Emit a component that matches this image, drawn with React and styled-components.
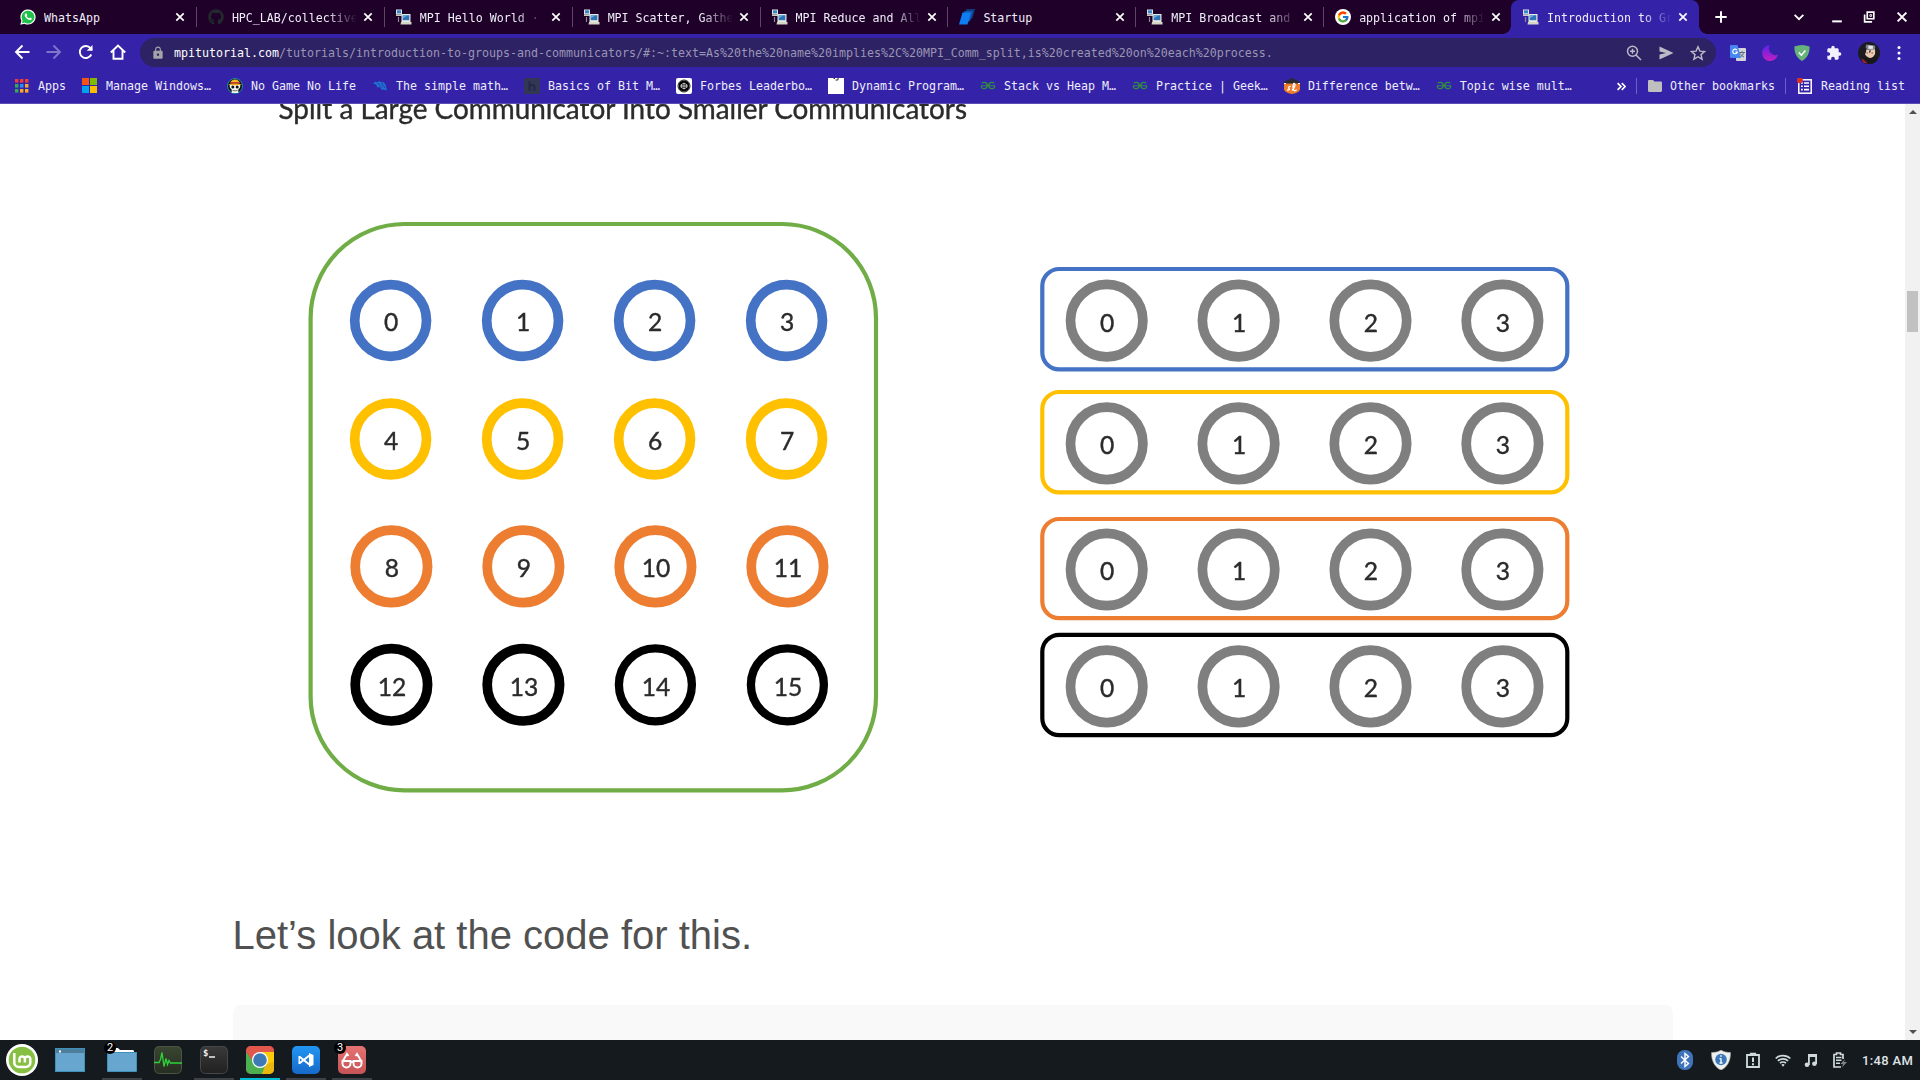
import React from 'react';
import styled, { createGlobalStyle } from 'styled-components';
import { MdLock, MdExtension } from 'react-icons/md';
import { FaGithub } from 'react-icons/fa';
import { FcGoogle } from 'react-icons/fc';
import { SiGeeksforgeeks, SiCodepen } from 'react-icons/si';

const Global = createGlobalStyle`
  * { box-sizing: border-box; }
  body { margin: 0; background: #fff; overflow: hidden; }
  svg { display: block; flex: none; }
`;

const Screen = styled.div`
  width: 1920px;
  height: 1080px;
  display: flex;
  flex-direction: column;
  overflow: hidden;
`;

const Chrome = styled.header`
  height: 104px;
  flex: none;
  background: #3423a9;
  border-bottom: 1px solid #5c4fba;
  font: 11.63px/16px 'DejaVu Sans Mono', monospace;
  color: #efedf8;
  white-space: pre;
`;

const TabStrip = styled.div`
  height: 34px;
  display: flex;
  padding-left: 8px;
  background: #1e0029;
`;

const TabBox = styled.div`
  width: 187.88px;
  height: 34px;
  display: flex;
  align-items: center;
  padding: 0 10.5px 0 12px;
  position: relative;
  background: ${(p) => (p.$active ? '#3423a9' : 'transparent')};
  border-radius: 8px 8px 0 0;
  &::before, &::after {
    content: '';
    display: ${(p) => (p.$active ? 'block' : 'none')};
    position: absolute;
    bottom: 0;
    width: 8px;
    height: 8px;
  }
  &::before { left: -8px; background: radial-gradient(circle at 0 0, transparent 7.5px, #3423a9 8px); }
  &::after { right: -8px; background: radial-gradient(circle at 100% 0, transparent 7.5px, #3423a9 8px); }
`;

const TabDivider = styled.i`
  position: absolute;
  right: -1px;
  top: 7px;
  width: 1px;
  height: 20px;
  background: #5d4666;
`;

const TabTitle = styled.span`
  flex: 1;
  min-width: 0;
  margin: 2px 6px 0 8px;
  overflow: hidden;
  ${(p) => p.$fade && 'mask-image: linear-gradient(90deg, #000 calc(100% - 30px), transparent);'}
`;

const WindowButtons = styled.div`
  flex: 1;
  display: flex;
  align-items: center;
  padding-left: 15px;
`;

const Control = styled.span`
  width: 14px;
  height: 14px;
  margin-left: ${(p) => p.$left || 0}px;
`;

const Toolbar = styled.div`
  height: 37px;
  display: flex;
  align-items: center;
  padding: 0 7px 0 14px;
`;

const NavButtons = styled.div`
  display: flex;
  gap: 16px;
  width: 126px;
  margin-top: -1px;
`;

const Omnibox = styled.div`
  width: 1576px;
  height: 29px;
  border-radius: 15px;
  background: #2c2264;
  display: flex;
  align-items: center;
  padding: 0 10px 0 11px;
  color: #9b95b5;
`;

const Url = styled.span`
  flex: 1;
  margin-left: 9px;
  b { font-weight: 400; color: #fff; }
`;

const OmniActions = styled.div`
  display: flex;
  gap: 16px;
`;

const Extensions = styled.div`
  display: flex;
  align-items: center;
  gap: 16px;
  margin-left: 14px;
`;

const BookmarkBar = styled.div`
  height: 32px;
  display: flex;
  align-items: center;
  padding: 0 15px 2px 14px;
`;

const BookmarkItem = styled.div`
  display: flex;
  align-items: center;
  gap: 8px;
  margin-right: ${(p) => (p.$last ? 0 : 16)}px;
`;

const Overflow = styled.div`
  margin: 0 8px 0 auto;
`;

const BarDivider = styled.i`
  width: 1px;
  height: 16px;
  margin: 0 11px 0 ${(p) => p.$pull || 0}px;
  background: #6d60c3;
`;

const Viewport = styled.main`
  flex: 1;
  min-height: 0;
  display: flex;
`;

const Page = styled.div`
  flex: 1;
  padding: 0 232px 0 233px;
  overflow: hidden;
  background: #fff;
`;

const Figure = styled.figure`
  margin: 0;
  height: 776px;
  svg { filter: blur(0.6px); overflow: hidden; }
  text {
    font-family: Lato, sans-serif;
    fill: #2b2b2b;
    stroke: #2b2b2b;
    stroke-width: 0.4px;
  }
`;

const Paragraph = styled.p`
  margin: 0 0 0 -0.5px;
  height: 125px;
  padding-top: 32px;
  font: 40px/46px 'Liberation Sans', Arial, sans-serif;
  color: #515151;
`;

const CodeBlock = styled.div`
  height: 60px;
  border-radius: 8px;
  background: #f9f9f9;
`;

const Scrollbar = styled.div`
  width: 15px;
  background: #f1f1f1;
  display: flex;
  flex-direction: column;
  align-items: center;
  padding: 6px 0;
`;

const Thumb = styled.div`
  width: 11px;
  height: 41px;
  margin-top: 177px;
  margin-bottom: auto;
  background: #c1c1c1;
`;

const Taskbar = styled.footer`
  height: 40px;
  flex: none;
  background: #151a1e;
  display: flex;
  align-items: center;
  padding: 0 8px 0 2px;
`;

const Launcher = styled.div`
  width: 40px;
  height: 40px;
  margin-right: ${(p) => p.$gap ?? 6}px;
  display: flex;
  align-items: center;
  justify-content: center;
  position: relative;
  border-bottom: 2px solid ${(p) => p.$line || 'transparent'};
  border-top: 2px solid transparent;
`;

const Badge = styled.span`
  position: absolute;
  left: 2px;
  top: 0;
  width: 12px;
  height: 12px;
  border-radius: 50%;
  background: #000;
  color: #fff;
  font: 11px/12px Roboto, sans-serif;
  text-align: center;
`;

const Tray = styled.div`
  display: flex;
  align-items: center;
  margin-left: auto;
`;

const TrayIcon = styled.span`
  display: flex;
  justify-content: center;
  width: ${(p) => p.$w}px;
  margin-right: ${(p) => p.$gap}px;
`;

const Clock = styled.span`
  width: 50px;
  margin-top: 1px;
  font: 500 13px/16px Roboto, sans-serif;
  letter-spacing: 0.35px;
  white-space: nowrap;
  color: #dfe3e6;
`;

/* ---------- favicons ---------- */

const WhatsAppIcon = () => (
  <svg width="16" height="16" viewBox="0 0 16 16">
    <path d="M0.3 15.8l1.1-4A7.6 7.6 0 1 1 4.4 14.7z" fill="#fff" />
    <path d="M1.8 14.3l.8-2.8A6.4 6.4 0 1 1 4.6 13.5z" fill="#1fc04b" />
    <path d="M5.6 4.4c.5-.5.9-.1 1.1.4l.5 1.1c.1.4-.7 1-.5 1.3.6 1 1.3 1.6 2.3 2.1.4.1.9-1 1.2-.8l1.3.7c.5.2.3 1.1-.2 1.5-2.6 1.7-7.4-2.7-6.5-5.1.1-.5.5-1 .8-1.2z" fill="#fff" />
  </svg>
);

const MpiIcon = () => (
  <svg width="16" height="16" viewBox="0 0 16 16">
    <rect x="0" y="0.5" width="6" height="5" fill="#dfe6ea" />
    <rect x="1" y="1.3" width="4" height="3" fill="#3c83c9" />
    <rect x="0" y="5.5" width="6" height="1.5" fill="#c9ccc4" />
    <path d="M2.5 8v5" stroke="#8e8a96" strokeWidth="1.2" />
    <rect x="5.5" y="5" width="9" height="8" fill="#e8eae2" />
    <rect x="6.7" y="6.2" width="6.6" height="5" fill="#2d75b8" />
    <path d="M6.7 6.2h5l-5 3z" fill="#6fb0e2" />
    <path d="M5 13h10.5v2.5h-11z" fill="#d5d5c8" />
  </svg>
);

const StartupIcon = () => (
  <svg width="16" height="16" viewBox="0 0 16 16">
    <path d="M7 0h9l-2.5 9-3 2.5z" fill="#0b3d80" />
    <path d="M5 2h9l-3 10-3 1z" fill="#0f58b0" />
    <path d="M3.5 3.5h8.500L8.5 15.500H0z" fill="#0e7df2" />
  </svg>
);

const tabs = [
  { icon: <WhatsAppIcon />, title: 'WhatsApp' },
  { icon: <FaGithub size={16} color="#24292e" />, title: 'HPC_LAB/collective', fade: true },
  { icon: <MpiIcon />, title: 'MPI Hello World · ', fade: true },
  { icon: <MpiIcon />, title: 'MPI Scatter, Gathe', fade: true },
  { icon: <MpiIcon />, title: 'MPI Reduce and All', fade: true },
  { icon: <StartupIcon />, title: 'Startup' },
  { icon: <MpiIcon />, title: 'MPI Broadcast and ', fade: true },
  {
    icon: (
      <svg width="16" height="16" viewBox="0 0 16 16">
        <circle cx="8" cy="8" r="8" fill="#fff" />
        <FcGoogle x="1.5" y="1.5" size={13} />
      </svg>
    ),
    title: 'application of mpi',
    fade: true,
  },
  { icon: <MpiIcon />, title: 'Introduction to Gr', fade: true, active: true },
];

const CloseIcon = () => (
  <svg width="10" height="10" viewBox="0 0 10 10">
    <path d="M1.3 1.3l7.4 7.4M8.7 1.3L1.3 8.7" stroke="#fff" strokeWidth="1.7" />
  </svg>
);

function Tab({ icon, title, fade, active, divider }) {
  return (
    <TabBox $active={active}>
      {icon}
      <TabTitle $fade={fade}>{title}</TabTitle>
      <CloseIcon />
      {divider && <TabDivider />}
    </TabBox>
  );
}

/* ---------- bookmark icons ---------- */

const AppsIcon = () => {
  const colors = ['#f23d35', '#f23d35', '#f23d35', '#34a853', '#2f8cf0', '#f9a825', '#34a853', '#f9a825', '#f9a825'];
  return (
    <svg width="16" height="16" viewBox="0 0 16 16">
      {colors.map((c, i) => (
        <rect key={i} x={1 + (i % 3) * 5} y={1 + Math.floor(i / 3) * 5} width="3.4" height="3.6" fill={c} />
      ))}
    </svg>
  );
};

const WindowsIcon = () => (
  <svg width="16" height="16" viewBox="0 0 16 16">
    <rect width="7" height="7" fill="#f65314" />
    <rect x="8" width="7" height="7" fill="#7cbb00" />
    <rect y="8" width="7" height="7" fill="#00a1f1" />
    <rect x="8" y="8" width="7" height="7" fill="#ffbb00" />
  </svg>
);

const PirateIcon = () => (
  <svg width="16" height="16" viewBox="0 0 16 16">
    <circle cx="8" cy="8" r="7.5" fill="#0b1418" stroke="#1ba4b5" strokeWidth=".8" />
    <path d="M3 6h10c1 3.5-.7 4.8-1.7 5.500V15H4.700v-3.500C3.700 10.800 2 9.500 3 6z" fill="#f4f4f0" />
    <circle cx="5.8" cy="9" r="1.5" fill="#111" />
    <circle cx="10.2" cy="9" r="1.5" fill="#111" />
    <path d="M5.5 12.700h5" stroke="#333" strokeWidth=".7" />
    <path d="M3.5 5C3.5 .2 12.5 .2 12.5 5z" fill="#f5b921" />
    <path d="M3.5 4h9v1.500h-9z" fill="#d8322b" />
    <path d="M.8 6.500C3 5 13 5 15.200 6.500c-3 .9-11.400.9-14.400 0z" fill="#f0a91d" />
  </svg>
);

const MathIcon = () => (
  <svg width="16" height="16" viewBox="0 0 16 16">
    <path d="M1 5.500l2.500-2 2 1 1.500-1.500 3 1.500 1.500-.5 2 2.500 1.500 6-3.500-1-1.500.5-2.500-3-2 .5-1.500-3z" fill="#1d72cf" />
    <path d="M6 5l4 5M9.500 5l3.500 5" stroke="#3423a9" strokeWidth=".7" />
  </svg>
);

const HackerEarthIcon = () => (
  <svg width="16" height="16" viewBox="0 0 16 16">
    <rect width="16" height="16" rx="1" fill="#323754" />
    <path d="M5.500 3v10M5.500 8.500c0-2 5-2.500 5 0V13" stroke="#26264a" strokeWidth="1.8" fill="none" />
  </svg>
);

const CodeIcon = () => (
  <svg width="16" height="16" viewBox="0 0 16 16">
    <rect width="16" height="16" rx="2" fill="#fff" />
    <SiCodepen x="2.5" y="2.5" size={11} color="#000" />
    <circle cx="8" cy="8" r="6" fill="none" stroke="#000" strokeWidth="0.9" />
  </svg>
);

const PaperIcon = () => (
  <svg width="16" height="16" viewBox="0 0 16 16">
    <rect width="16" height="16" fill="#fff" />
    <path d="M5.500 .5h1.500M10 0v2H7.500" stroke="#333" strokeWidth="1" fill="none" />
  </svg>
);

const GeeksIcon = () => (
  <svg width="16" height="16" viewBox="0 0 16 16">
    <SiGeeksforgeeks x="0.5" y="0" size={15} color="#2f8d46" />
  </svg>
);

const SimpliIcon = () => (
  <svg width="16" height="16" viewBox="0 0 16 16">
    <path d="M0 5h16v6c0 3-5 4.500-8 5-3-.5-8-2-8-5z" fill="#ef7b2c" />
    <path d="M0 4l8-4 8 4v1.500H0z" fill="#2b2930" />
    <path d="M0 5.500h2M14 5.500h2" stroke="#fff" strokeWidth="1.2" />
    <path d="M3 12c2 .5 3-.4 2-1.500s0-2.300 1.600-2M8 12.500c2-2 4-6 2.600-7S8.300 10 9.600 12s3-.5 3-.5" stroke="#fff" strokeWidth="1.3" fill="none" />
  </svg>
);

const bookmarks = [
  [<AppsIcon />, 'Apps'],
  [<WindowsIcon />, 'Manage Windows…'],
  [<PirateIcon />, 'No Game No Life'],
  [<MathIcon />, 'The simple math…'],
  [<HackerEarthIcon />, 'Basics of Bit M…'],
  [<CodeIcon />, 'Forbes Leaderbo…'],
  [<PaperIcon />, 'Dynamic Program…'],
  [<GeeksIcon />, 'Stack vs Heap M…'],
  [<GeeksIcon />, 'Practice | Geek…'],
  [<SimpliIcon />, 'Difference betw…'],
  [<GeeksIcon />, 'Topic wise mult…'],
];

/* ---------- toolbar icons ---------- */

const Stroke = ({ d, size = 16, color = '#fff', w = 1.9, children }) => (
  <svg width={size} height={size} viewBox="0 0 16 16" fill="none" stroke={color} strokeWidth={w}>
    <path d={d} />
    {children}
  </svg>
);

const TranslateIcon = () => (
  <svg width="16" height="16" viewBox="0 0 16 16">
    <rect x="6" y="3" width="10" height="13" rx="1" fill="#d3d5da" />
    <path d="M9 7.500h6M12 6v1.500M10 12.500c2-1.500 3.300-3 3.500-5M10.500 8.500c.6 1.800 2 3 3.500 3.500" stroke="#5b6d80" fill="none" />
    <path d="M0 1a1 1 0 0 1 1-1h6.500l3.500 13H1a1 1 0 0 1-1-1z" fill="#4688f1" />
    <path d="M7 5.200A2.300 2.300 0 1 0 7.300 7H5.300" stroke="#fff" strokeWidth="1.2" fill="none" />
  </svg>
);

const MoonIcon = () => (
  <svg width="16" height="16" viewBox="0 0 16 16">
    <defs>
      <linearGradient id="moon" x1="0" y1="0" x2="0" y2="1">
        <stop offset="0" stopColor="#5a22e8" />
        <stop offset="1" stopColor="#c41fc0" />
      </linearGradient>
    </defs>
    <path d="M8 0A6.500 6.500 0 0 0 16 9.500 8 8 0 1 1 8 0z" fill="url(#moon)" />
  </svg>
);

const ShieldIcon = () => (
  <svg width="16" height="16" viewBox="0 0 16 16">
    <path d="M8 0c2.500.2 5 .7 7.600 1.600C15.800 8 13.500 13 8 16 2.500 13 .2 8 .4 1.600 3 .7 5.500.2 8 0z" fill="#67b279" />
    <path d="M4.800 7.400l2.600 2.800 4-4.800" stroke="#fff" strokeWidth="1.5" fill="none" />
  </svg>
);

const Avatar = () => (
  <svg width="22" height="22" viewBox="0 0 22 22">
    <defs><clipPath id="face"><circle cx="11" cy="11" r="11" /></clipPath></defs>
    <g clipPath="url(#face)">
      <rect width="22" height="22" fill="#1b1b20" />
      <path d="M6 8l11-1.500c1.500 4-.5 8.500-4.500 9.500C9 15.500 6 12.500 6 8z" fill="#ecc9b2" />
      <path d="M8 2.500l9 1 .5 4-10 .5z" fill="#7d828a" />
      <path d="M10.500 3.500l4.500.5-.2 3-4.600-.3z" fill="#e3e6ea" />
      <path d="M4 6l4.500 0-.5 4-3 7zM11 8.500l.7 3 1.300-3zM17 6l.5 9 2.500-2V5z" fill="#1b1b20" />
      <path d="M8.500 11h1.500M13.500 11h1.500" stroke="#40252a" strokeWidth=".7" />
      <path d="M6 14.500l7 2.500 5-3 2 8H4z" fill="#17171c" />
      <path d="M3.500 16l6.500 5.500-5-.5z" fill="#a3222d" />
    </g>
  </svg>
);

const ReadingIcon = () => (
  <svg width="16" height="16" viewBox="0 0 16 16">
    <rect x="1.8" y="1.8" width="12.4" height="13.4" fill="none" stroke="#fff" strokeWidth="1.5" />
    <path d="M4 5h1.800M4 8.300h1.800M4 11.600h1.800M7 5h5M7 8.300h5M7 11.600h5" stroke="#fff" strokeWidth="1.6" />
    <circle cx="2.8" cy="2.3" r="3" fill="#d93025" />
  </svg>
);

/* ---------- figure ---------- */

const BLUE = '#4472c4';
const YELLOW = '#ffc000';
const ORANGE = '#ed7d31';

const worldRows = [
  { color: BLUE, y: 320.5, x: 390.6, r: 35.9 },
  { color: YELLOW, y: 439, x: 390.6, r: 35.9 },
  { color: ORANGE, y: 566.4, x: 391.4, r: 36.2 },
  { color: '#000', y: 684.8, x: 391.4, r: 36.2 },
];

const splitRows = [
  { color: BLUE, top: 269, y: 320.6 },
  { color: YELLOW, top: 392, y: 443.4 },
  { color: ORANGE, top: 519, y: 569.5, height: 99.2 },
  { color: '#000', top: 634.8, y: 686.4 },
];

const Node = ({ x, y, r, color, label, w = 9.7 }) => (
  <g>
    <circle cx={x} cy={y} r={r} fill="#fff" stroke={color} strokeWidth={w} />
    <text x={x + 0.5} y={y + 10.9} fontSize="24.6" textAnchor="middle">{label}</text>
  </g>
);

const CommunicatorFigure = () => (
  <svg width="1440" height="776" viewBox="233 104 1440 776">
    <text x="278.5" y="118.7" fontSize="29" textLength="688.5" lengthAdjust="spacingAndGlyphs">
      Split a Large Communicator Into Smaller Communicators
    </text>
    <rect x="310.6" y="224" width="565.4" height="566.4" rx="94" fill="none" stroke="#70ad47" strokeWidth="4.2" />
    {worldRows.map((row, i) =>
      [0, 1, 2, 3].map((c) => (
        <Node
          key={`${i}-${c}`}
          {...row}
          x={row.x + c * 132}
          r={i === 3 && c > 1 ? 36.5 : row.r}
          w={i === 3 && c > 1 ? 8.3 : 9.7}
          label={i * 4 + c}
        />
      ))
    )}
    {splitRows.map((row) => (
      <g key={row.color}>
        <rect x="1042.3" y={row.top} width="525" height={row.height || 100.4} rx="17" fill="none" stroke={row.color} strokeWidth="4.2" />
        {[0, 1, 2, 3].map((c) => (
          <Node key={c} x={1106.7 + c * 131.9} y={row.y} r={36.2} color="#7f7f7f" label={c} />
        ))}
      </g>
    ))}
  </svg>
);

/* ---------- taskbar icons ---------- */

const MintIcon = () => (
  <svg width="32" height="32" viewBox="0 0 32 32">
    <circle cx="16" cy="16" r="16" fill="#fff" />
    <circle cx="16" cy="16" r="13.3" fill="#87bf43" />
    <path d="M8.300 9v9.500a4.500 4.500 0 0 0 4.500 4.500h7a4.500 4.500 0 0 0 4.500-4.500v-4a2.800 2.800 0 0 0-5.400 0V18.500M18.900 15v-.5a2.800 2.800 0 0 0-5.400 0v4" fill="none" stroke="#fff" strokeWidth="2.5" />
  </svg>
);

const DesktopIcon = () => (
  <svg width="30" height="24" viewBox="0 0 30 24">
    <rect width="30" height="24" fill="#3f91bd" />
    <rect x="1" y="5" width="28" height="18" fill="#67a7cf" />
    <rect x="1" y="1" width="28" height="4" fill="#4d7f9c" />
    <rect x="4" y="2.5" width="2" height="2" fill="#fff" />
  </svg>
);

const FilesIcon = () => (
  <svg width="30" height="24" viewBox="0 0 30 24">
    <path d="M1 5V1.500C1 .7 1.500 0 2.500 0H11l2 2h12.500c1 0 1.500.6 1.500 1.500V6z" fill="#fff" />
    <path d="M0 4h30v19a1 1 0 0 1-1 1H1a1 1 0 0 1-1-1z" fill="#3f91bd" />
    <rect x="1" y="5" width="28" height="18" fill="#67a7cf" />
  </svg>
);

const Tile = ({ id, from, to, children }) => (
  <svg width="28" height="28" viewBox="0 0 28 28">
    <defs>
      <linearGradient id={id} x1="0" y1="0" x2="0" y2="1">
        <stop offset="0" stopColor={from} />
        <stop offset="1" stopColor={to} />
      </linearGradient>
      <clipPath id={`${id}-clip`}><rect width="28" height="28" rx="5" /></clipPath>
    </defs>
    <g clipPath={`url(#${id}-clip)`}>
      <rect width="28" height="28" fill={`url(#${id})`} />
      {children}
    </g>
  </svg>
);

const MonitorIcon = () => (
  <Tile id="mon" from="#3a4632" to="#252d20">
    <rect x=".5" y=".5" width="27" height="27" rx="5" fill="none" stroke="#4b5547" />
    <path d="M0 16.500h5l1.500-3 1.500-7 2 14 2-8 1.500 6 1.500-4 1.500 2.500h11.500" fill="none" stroke="#2ed339" strokeWidth="1.3" />
  </Tile>
);

const TermText = styled.text`
  font: bold 9px 'DejaVu Sans Mono', monospace;
  fill: #f0f0f0;
`;

const TerminalIcon = () => (
  <Tile id="term" from="#3a3a3a" to="#202020">
    <rect x=".5" y=".5" width="27" height="27" rx="5" fill="none" stroke="#474747" />
    <TermText x="3" y="10">$</TermText>
    <path d="M9 11h6" stroke="#f0f0f0" strokeWidth="1.3" />
  </Tile>
);

const ChromeIcon = () => (
  <Tile id="chr" from="#e2574c" to="#d9483c">
    <path d="M14 6h14v22H14z" fill="#fbcb0a" />
    <path d="M0 6l9 12 11 1-4 9H0z" fill="#4cb050" />
    <path d="M20 18l-4 10h12V16z" fill="#e8b80e" />
    <path d="M0 0h28v6H14L8 16 0 4z" fill="#e2574c" />
    <circle cx="14" cy="14" r="8" fill="#fff" />
    <circle cx="14" cy="14" r="6.8" fill="#3d79b5" />
  </Tile>
);

const CodeEditorIcon = () => (
  <Tile id="vsc" from="#2196f3" to="#1769c9">
    <path d="M7.200 10.500L18 19M7.200 17.500L18 9" stroke="#fff" strokeWidth="2" fill="none" />
    <path d="M7.200 10v8" stroke="#fff" strokeWidth="1.4" />
    <path d="M17 7l4.500 2v10L17 21z" fill="#fff" />
  </Tile>
);

const GlassesIcon = () => (
  <Tile id="gls" from="#e57373" to="#c65355">
    <g fill="none" stroke="#fff" strokeWidth="1.9">
      <path d="M4.500 15h8v2.500a4 4 0 0 1-8 0zM15.500 15h8v2.500a4 4 0 0 1-8 0zM12.500 16h3M4.500 15.500L9 8l1.500 2M23.500 15.500L19 8l-1.500 2" />
    </g>
  </Tile>
);

const GREY_LINE = '#3e4246';

/* ---------- tray icons ---------- */

const BluetoothIcon = () => (
  <svg width="16" height="20" viewBox="0 0 16 20">
    <rect width="16" height="20" rx="7.5" fill="#3f74ba" />
    <path d="M4 6.500l7.500 7L8 16.500v-13l3.500 3L4 13.500" stroke="#fff" strokeWidth="1.4" fill="none" />
  </svg>
);

const UpdateShield = () => (
  <svg width="20" height="20" viewBox="0 0 20 20">
    <path d="M10 0c2.500 1.800 6 2.500 9.500 2.500C19.800 11 16 17.500 10 20 4 17.500.2 11 .5 2.500 4 2.500 7.500 1.800 10 0z" fill="#eef0ee" stroke="#9fa3a0" strokeWidth=".6" />
    <circle cx="10" cy="9.5" r="5.8" fill="#3b78b9" />
    <path d="M10 8.500v4.500M8.500 8.700H10M8.500 13h3M9.300 6h1.400" stroke="#fff" strokeWidth="1.3" />
  </svg>
);

const ClipboardIcon = () => (
  <svg width="14" height="16" viewBox="0 0 14 16">
    <path d="M1 3h12v12H1z" fill="none" stroke="#d0dade" strokeWidth="1.8" />
    <path d="M4.500 3.500V1.500h5v2" fill="none" stroke="#d0dade" strokeWidth="1.3" />
    <path d="M7 5.500v4.500M7 11.200v2" stroke="#d0dade" strokeWidth="2" />
  </svg>
);

const WifiIcon = () => (
  <svg width="16" height="13" viewBox="0 0 16 13" fill="none" stroke="#d0dade" strokeWidth="1.7">
    <path d="M.7 4.500a10.500 10.500 0 0 1 14.600 0M2.900 6.900a7.300 7.300 0 0 1 10.200 0M5 9.200a4.300 4.300 0 0 1 6 0" />
    <path d="M6.300 10.800a2.500 2.500 0 0 1 3.400 0L8 12.700z" fill="#d0dade" stroke="none" />
  </svg>
);

const MusicIcon = () => (
  <svg width="13" height="13" viewBox="0 0 13 13">
    <path d="M4 0h9v10h-1.800V3H5.800v8H4z" fill="#d0dade" />
    <circle cx="3" cy="10.7" r="2.3" fill="#d0dade" />
    <circle cx="10.4" cy="9.7" r="2.3" fill="#d0dade" />
  </svg>
);

const BatteryIcon = () => (
  <svg width="14" height="16" viewBox="0 0 14 16">
    <path d="M8 15H1V2.500h2.500V1h4v1.500H10V7" fill="none" stroke="#d0dade" strokeWidth="1.7" />
    <path d="M3 5.500h5.500M3 8.300h5.500M3 11.200h4" stroke="#d0dade" strokeWidth="1.5" />
    <path d="M12 7l-4.500 5H10l-1 3.500 5-5.500h-3z" fill="#7d8589" />
  </svg>
);

export default function App() {
  return (
    <Screen>
      <Global />
      <Chrome>
        <TabStrip>
          {tabs.map((t, i) => (
            <Tab key={i} {...t} divider={i < 7} />
          ))}
          <WindowButtons>
            <Stroke size={14} w={2.3} d="M8 1.500v13M1.500 8h13" />
            <Control $left={64}><Stroke size={14} w={2} d="M3 5.500l5 5 5-5" /></Control>
            <Control $left={24}><Stroke size={14} w={2.3} d="M2.500 13h11" /></Control>
            <Control $left={18}>
              <Stroke size={14} w={1.9} d="M6 2.500h7.500v7.500H6z">
                <path d="M3 5v8.500h8.500" />
                <path d="M9 5.300h2v2H9z" strokeWidth="1" />
              </Stroke>
            </Control>
            <Control $left={19}><Stroke size={14} w={2.3} d="M3 3l10 10M13 3L3 13" /></Control>
          </WindowButtons>
        </TabStrip>
        <Toolbar>
          <NavButtons>
            <Stroke d="M15.500 8H2M8.500 1.500L2 8l6.500 6.500" />
            <Stroke color="#8076cc" d="M.5 8H14M7.500 1.500L14 8l-6.500 6.500" />
            <Stroke d="M13.300 10.500A6 6 0 1 1 12.500 4.200L14 6">
              <path d="M14.500 1v5.800H8.700z" fill="#fff" stroke="none" />
            </Stroke>
            <Stroke d="M.8 8.500L8 1.500l7.200 7M3.500 6.500v8.300h9V6.500" />
          </NavButtons>
          <Omnibox>
            <MdLock size={14} color="#a3a3a9" />
            <Url>
              <b>mpitutorial.com</b>
              /tutorials/introduction-to-groups-and-communicators/#:~:text=As%20the%20name%20implies%2C%20MPI_Comm_split,is%20created%20on%20each%20process.
            </Url>
            <OmniActions>
              <Stroke color="#bdbac8" w={1.5} d="M10 10l5 5M4 6.300h5M6.500 3.800v5">
                <circle cx="6.5" cy="6.3" r="5" />
              </Stroke>
              <svg width="16" height="16" viewBox="0 0 16 16"><path d="M1.500 1.500L15.500 8l-14 6.500V9.600L8 8 1.500 6.400z" fill="#bdbac8" /></svg>
              <Stroke color="#bdbac8" w={1.4} d="M8 1.800l1.900 4.300 4.700.4-3.600 3.100 1.100 4.600L8 11.700l-4.100 2.500L5 9.600 1.400 6.500l4.700-.4z" />
            </OmniActions>
          </Omnibox>
          <Extensions>
            <TranslateIcon />
            <MoonIcon />
            <ShieldIcon />
            <MdExtension size={16} color="#f3f1fa" />
            <Avatar />
            <svg width="16" height="16" viewBox="0 0 16 16" fill="#fff">
              <circle cx="3" cy="2.5" r="1.5" />
              <circle cx="3" cy="8" r="1.5" />
              <circle cx="3" cy="13.5" r="1.5" />
            </svg>
          </Extensions>
        </Toolbar>
        <BookmarkBar>
          {bookmarks.map(([icon, label]) => (
            <BookmarkItem key={label}>
              {icon}
              <span>{label}</span>
            </BookmarkItem>
          ))}
          <Overflow>
            <Stroke size={9} w={3} d="M1 2l6 6-6 6M8.500 2l6 6-6 6" />
          </Overflow>
          <BarDivider $pull={2} />
          <BookmarkItem>
            <svg width="14" height="12" viewBox="0 0 14 12"><path d="M0 1.200C0 .5.500 0 1.200 0H5l1.500 1.500h6.300c.7 0 1.200.5 1.200 1.200v8.100c0 .7-.5 1.200-1.200 1.200H1.200C.5 12 0 11.500 0 10.800z" fill="#bfbfbf" /></svg>
            <span>Other bookmarks</span>
          </BookmarkItem>
          <BarDivider $pull={-6} />
          <BookmarkItem $last>
            <ReadingIcon />
            <span>Reading list</span>
          </BookmarkItem>
        </BookmarkBar>
      </Chrome>
      <Viewport>
        <Page>
          <Figure><CommunicatorFigure /></Figure>
          <Paragraph>Let’s look at the code for this.</Paragraph>
          <CodeBlock />
        </Page>
        <Scrollbar>
          <svg width="8" height="4" viewBox="0 0 8 4"><path d="M0 4l4-4 4 4z" fill="#505050" /></svg>
          <Thumb />
          <svg width="8" height="4" viewBox="0 0 8 4"><path d="M0 0l4 4 4-4z" fill="#505050" /></svg>
        </Scrollbar>
      </Viewport>
      <Taskbar>
        <Launcher $gap={8}><MintIcon /></Launcher>
        <Launcher $gap={12}><DesktopIcon /></Launcher>
        <Launcher $line={GREY_LINE}><FilesIcon /><Badge>2</Badge></Launcher>
        <Launcher><MonitorIcon /></Launcher>
        <Launcher $line={GREY_LINE}><TerminalIcon /></Launcher>
        <Launcher $line="#00bcd4"><ChromeIcon /></Launcher>
        <Launcher $line={GREY_LINE}><CodeEditorIcon /></Launcher>
        <Launcher $line={GREY_LINE}><GlassesIcon /><Badge>3</Badge></Launcher>
        <Tray>
          <TrayIcon $w={16} $gap={18}><BluetoothIcon /></TrayIcon>
          <TrayIcon $w={20} $gap={15}><UpdateShield /></TrayIcon>
          <TrayIcon $w={14} $gap={15}><ClipboardIcon /></TrayIcon>
          <TrayIcon $w={16} $gap={13}><WifiIcon /></TrayIcon>
          <TrayIcon $w={13} $gap={16}><MusicIcon /></TrayIcon>
          <TrayIcon $w={14} $gap={15}><BatteryIcon /></TrayIcon>
          <Clock>1:48 AM</Clock>
        </Tray>
      </Taskbar>
    </Screen>
  );
}
